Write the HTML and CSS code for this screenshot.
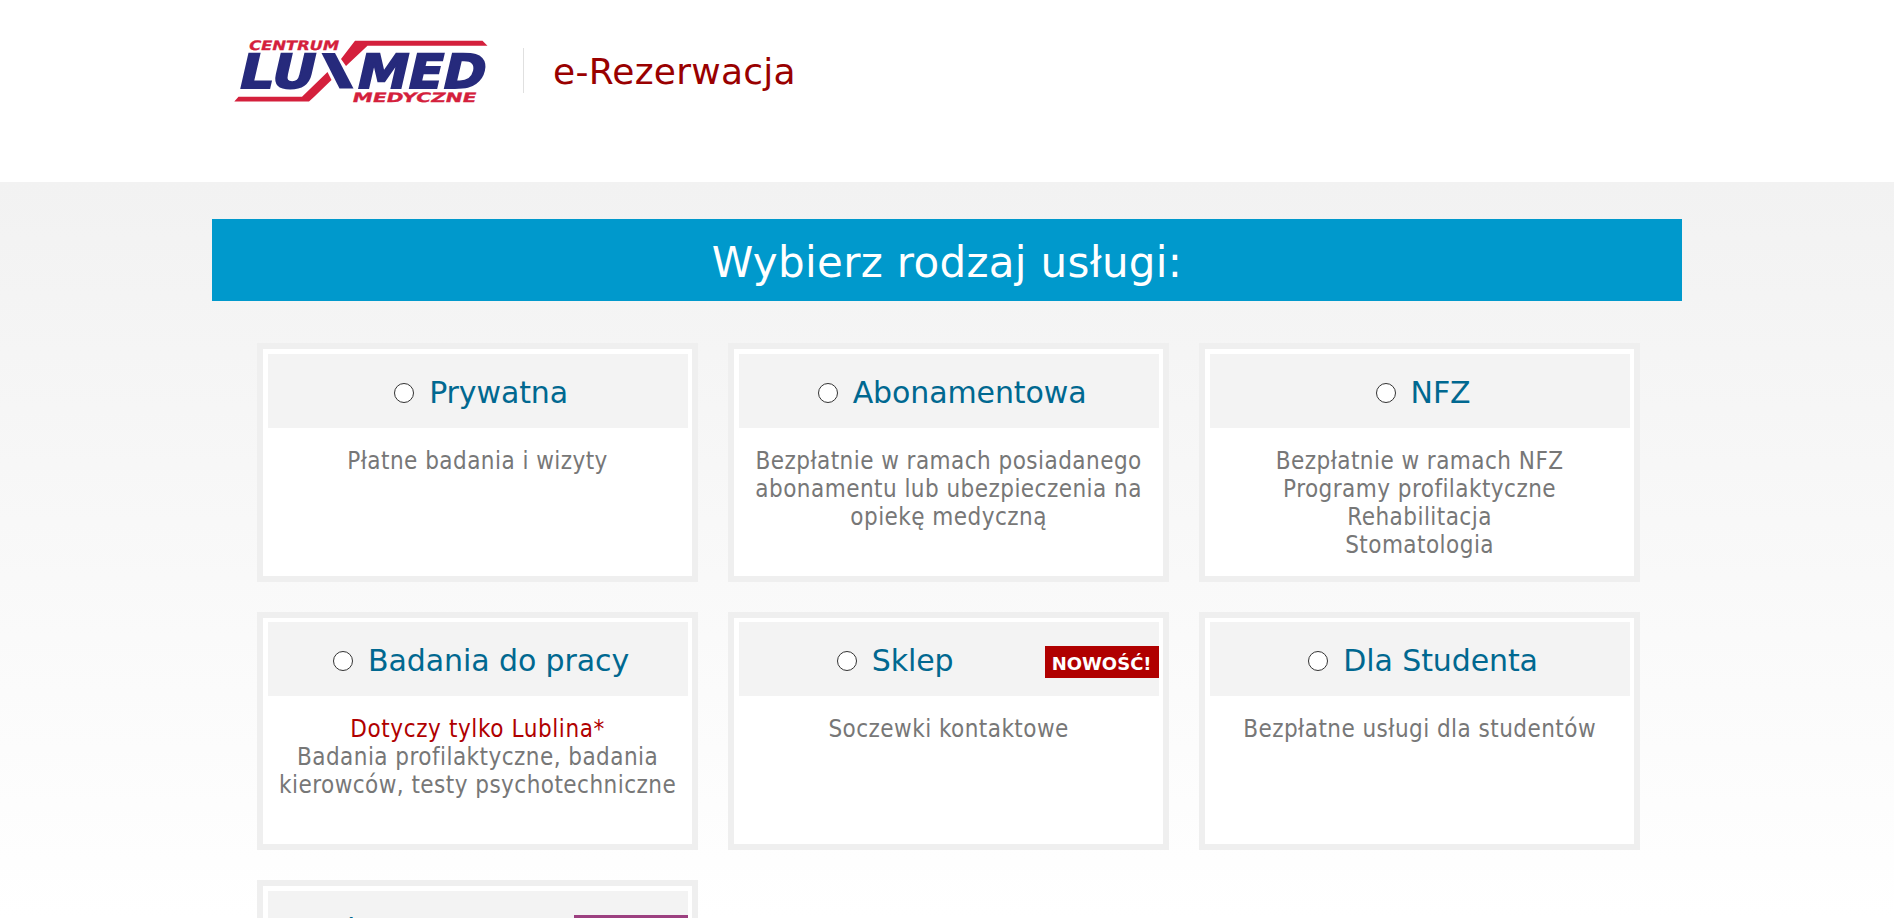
FILE: index.html
```html
<!DOCTYPE html>
<html lang="pl">
<head>
<meta charset="utf-8">
<title>e-Rezerwacja</title>
<link rel="stylesheet" href="styles.css">
</head>
<body>
<header class="top">
  <div class="top-inner">
    <svg class="logo" viewBox="0 0 290 90" width="290" height="90" role="img" aria-label="Centrum Medyczne Luxmed">
      <g class="logo-red">
        <path d="M135 15.7H262.5L267.5 20.7H147.5L126 41L121 34Z"/>
        <path d="M14.3 76.5L18.5 71.7H82L107.5 47L111.5 55L95 71L89 76.5Z"/>
        <text transform="translate(28 25) skewX(-14)" font-size="13" textLength="90" lengthAdjust="spacingAndGlyphs">CENTRUM</text>
        <text transform="translate(131.5 76.5) skewX(-14)" font-size="13" textLength="124" lengthAdjust="spacingAndGlyphs">MEDYCZNE</text>
      </g>
      <g class="logo-blue">
        <text transform="translate(16.5 63) skewX(-13)" font-size="47" textLength="76" lengthAdjust="spacingAndGlyphs">LU</text>
        <path d="M101.5 28H115L133.5 63.5H119.5Z"/>
        <text transform="translate(134.5 63) skewX(-13)" font-size="47" textLength="128" lengthAdjust="spacingAndGlyphs">MED</text>
      </g>
    </svg>
    <div class="site-name">e-Rezerwacja</div>
  </div>
</header>
<main class="page">
  <h1 class="banner">Wybierz rodzaj usługi:</h1>
  <div class="cards">
    <section class="card">
      <div class="card-head"><label class="choice"><input class="radio" type="radio" name="service">Prywatna</label></div>
      <p class="desc">Płatne badania i wizyty</p>
    </section>
    <section class="card">
      <div class="card-head"><label class="choice"><input class="radio" type="radio" name="service">Abonamentowa</label></div>
      <p class="desc">Bezpłatnie w ramach posiadanego<br>abonamentu lub ubezpieczenia na<br>opiekę medyczną</p>
    </section>
    <section class="card">
      <div class="card-head"><label class="choice"><input class="radio" type="radio" name="service">NFZ</label></div>
      <p class="desc">Bezpłatnie w ramach NFZ<br>Programy profilaktyczne<br>Rehabilitacja<br>Stomatologia</p>
    </section>
    <section class="card">
      <div class="card-head"><label class="choice"><input class="radio" type="radio" name="service">Badania do pracy</label></div>
      <p class="desc"><span class="note">Dotyczy tylko Lublina*</span><br>Badania profilaktyczne, badania<br>kierowców, testy psychotechniczne</p>
    </section>
    <section class="card">
      <div class="card-head"><label class="choice"><input class="radio" type="radio" name="service">Sklep</label><span class="badge">NOWOŚĆ!</span></div>
      <p class="desc">Soczewki kontaktowe</p>
    </section>
    <section class="card">
      <div class="card-head"><label class="choice"><input class="radio" type="radio" name="service">Dla Studenta</label></div>
      <p class="desc">Bezpłatne usługi dla studentów</p>
    </section>
    <section class="card">
      <div class="card-head"><span class="choice choice-start">l</span><span class="badge badge-purple"></span></div>
    </section>
  </div>
</main>
</body>
</html>
```
FILE: styles.css
```css
* { box-sizing: border-box; }
body {
  margin: 0;
  height: 918px;
  overflow: hidden;
  background: #fff;
  font-family: "DejaVu Sans", Verdana, sans-serif;
}
.top { height: 182px; background: #fff; }
.top-inner {
  width: 1470px;
  margin: 0 auto;
  padding: 25px 0 0 8px;
  display: flex;
}
.logo { flex: none; }
.logo text {
  font-family: "DejaVu Sans", sans-serif;
  font-weight: bold;
}
.logo-red { fill: #d4203c; }
.logo-red text { stroke: #d4203c; stroke-width: .3px; }
.logo-blue { fill: #262a7c; }
.logo-blue text { stroke: #262a7c; stroke-width: 1.8px; }
.site-name {
  margin: 23px 0 0 13px;
  height: 45px;
  padding-left: 29px;
  border-left: 1px solid #e0e0e0;
  color: #900;
  font-size: 36px;
  line-height: 48px;
  letter-spacing: .25px;
  white-space: nowrap;
}
.page {
  height: 736px;
  overflow: hidden;
  padding-top: 37px;
  background: linear-gradient(#f2f2f2, #fff);
}
.banner {
  width: 1470px;
  height: 82px;
  margin: 0 auto;
  background: #09c;
  color: #fff;
  font-size: 42px;
  font-weight: normal;
  line-height: 88px;
  letter-spacing: .32px;
  text-align: center;
}
.cards {
  width: 1383px;
  margin: 42.2px auto 0;
  padding-left: 1.6px;
  display: grid;
  grid-template-columns: repeat(3, 441px);
  grid-auto-rows: 238.5px;
  gap: 30px;
}
.card {
  border: 6px solid #efefef;
  padding: 4.5px;
  background: #fff;
}
.card-head {
  height: 74px;
  display: flex;
  background: #f3f3f3;
}
.choice {
  flex: 1;
  display: flex;
  justify-content: center;
  padding: 19px 0 0 7px;
  color: #006890;
  font-size: 30px;
  line-height: 40px;
  letter-spacing: -.1px;
  white-space: nowrap;
}
.choice-start { justify-content: flex-start; padding-left: 79.5px; }
.radio {
  appearance: none;
  width: 20px;
  height: 20px;
  margin: 10px 15px 0 0;
  border: 1px solid #333;
  border-radius: 50%;
  background: #fff;
}
.badge {
  width: 114px;
  height: 32px;
  margin-top: 24px;
  background: #b00000;
  color: #fff;
  font-size: 18px;
  font-weight: bold;
  line-height: 35px;
  text-align: center;
}
.badge-purple { background: #9c4080; }
.desc {
  margin: 19px 0 0;
  color: #777;
  font-family: "DejaVu Sans Condensed", "DejaVu Sans", sans-serif;
  font-stretch: condensed;
  font-size: 24px;
  line-height: 28px;
  letter-spacing: .45px;
  text-align: center;
  white-space: nowrap;
}
.note { color: #b00000; letter-spacing: .6px; }
```
